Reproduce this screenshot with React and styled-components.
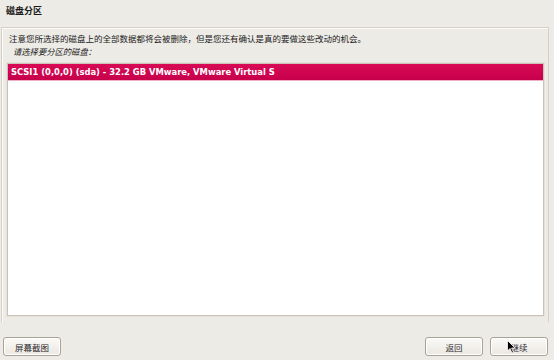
import React from "react";
import styled, { createGlobalStyle } from "styled-components";

const GlobalStyle = createGlobalStyle`
  html, body {
    margin: 0;
    padding: 0;
    background: #edebe6;
  }
  body {
    font-family: "DejaVu Sans", "Noto Sans CJK SC", sans-serif;
    color: #1a1a1a;
  }
`;

const Page = styled.div`
  width: 554px;
  height: 360px;
  display: flex;
  flex-direction: column;
  background: #edebe6;
  box-sizing: border-box;
  overflow: hidden;
`;

const Header = styled.div`
  height: 27px;
  padding: 5px 0 0 6px;
  box-sizing: border-box;
  font-size: 9px;
  font-weight: bold;
  line-height: 12px;
`;

const Frame = styled.div`
  flex: 1;
  margin: 0 5px 0 1px;
  border: 1px solid #d6d0c8;
  border-bottom: none;
  box-shadow: inset 1px 1px 0 #fbfaf8;
  padding: 5px 4px 4px 4px;
  display: flex;
  flex-direction: column;
  box-sizing: border-box;
`;

const Note = styled.div`
  font-size: 8.5px;
  line-height: 12px;
  padding-left: 3px;
`;

const Prompt = styled.div`
  font-size: 8.3px;
  font-style: italic;
  line-height: 12px;
  padding: 1px 0 0 7px;
  height: 18px;
  box-sizing: border-box;
`;

const ListBox = styled.div`
  flex: 1;
  background: #fff;
  border: 1px solid #cbc3b8;
  box-shadow: 0 0 0 1px #e6e1da;
  margin: 0 0 2px 1px;
`;

const Row = styled.div`
  height: 16px;
  padding: 0 3px;
  display: flex;
  align-items: center;
  font-size: 8.4px;
  font-weight: bold;
  color: ${(p) => (p.$selected ? "#fff" : "#1a1a1a")};
  background: ${(p) =>
    p.$selected ? "linear-gradient(#d80a55, #c7004b)" : "transparent"};
  border-bottom: 1px solid ${(p) => (p.$selected ? "#eeb0c8" : "transparent")};
  white-space: nowrap;
`;

const Footer = styled.div`
  height: 38px;
  display: flex;
  align-items: flex-start;
  padding: 15px 6px 0 3px;
  box-sizing: border-box;
  gap: 7px;
`;

const Spacer = styled.div`
  flex: 1;
`;

const Button = styled.button`
  width: 58px;
  height: 19px;
  padding: 0;
  font-family: "Noto Sans CJK SC", sans-serif;
  font-size: 8.5px;
  color: #2a2a2a;
  border: 1px solid #a9a298;
  border-radius: 3px;
  background: linear-gradient(#fbfaf8, #ebe7e1);
  box-shadow: inset 0 0 0 1px #fff;
  display: flex;
  align-items: center;
  justify-content: center;
  position: relative;
`;

const Cursor = styled.svg`
  position: absolute;
  left: 16px;
  top: 2px;
`;

const disks = [
  { id: "sda", label: "SCSI1 (0,0,0) (sda) - 32.2 GB VMware, VMware Virtual S", selected: true },
];

export default function App() {
  return (
    <Page>
      <GlobalStyle />
      <Header>磁盘分区</Header>
      <Frame>
        <Note>注意您所选择的磁盘上的全部数据都将会被删除，但是您还有确认是真的要做这些改动的机会。</Note>
        <Prompt>请选择要分区的磁盘：</Prompt>
        <ListBox>
          {disks.map((d) => (
            <Row key={d.id} $selected={d.selected}>
              {d.label}
            </Row>
          ))}
        </ListBox>
      </Frame>
      <Footer>
        <Button>屏幕截图</Button>
        <Spacer />
        <Button>返回</Button>
        <Button>
          继续
          <Cursor width="9" height="14" viewBox="0 0 9 14">
            <path d="M0.5 0.5 L0.5 11 L3 8.5 L5 13 L6.5 12.3 L4.6 8 L8 8 Z" fill="#000" stroke="#fff" strokeWidth="0.8" />
          </Cursor>
        </Button>
      </Footer>
    </Page>
  );
}
